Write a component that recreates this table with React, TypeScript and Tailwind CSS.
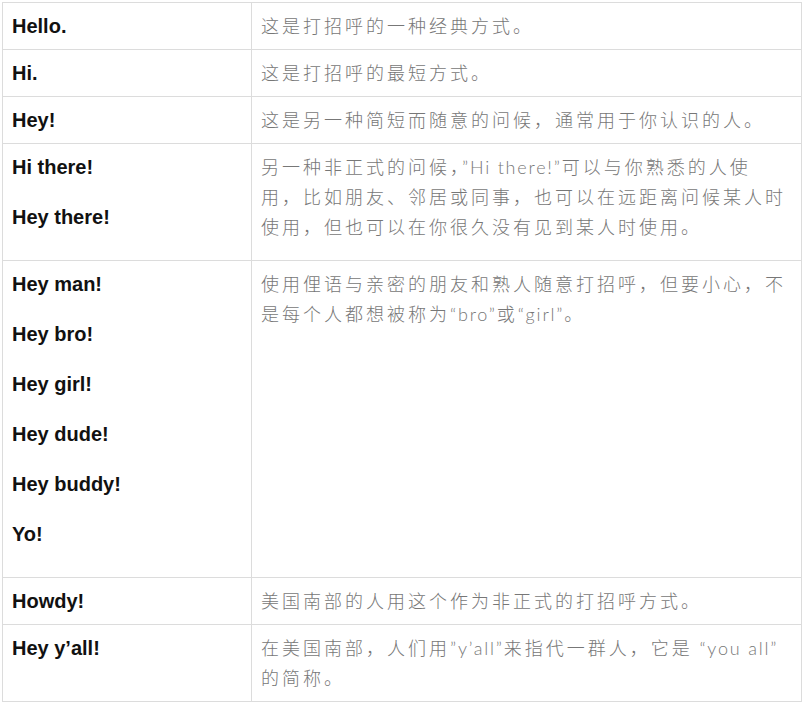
const rows: { left: string[]; right: string[]; tall?: boolean }[] = [
  { left: ["Hello."], right: ["这是打招呼的一种经典方式。"] },
  { left: ["Hi."], right: ["这是打招呼的最短方式。"] },
  { left: ["Hey!"], right: ["这是另一种简短而随意的问候，通常用于你认识的人。"] },
  {
    left: ["Hi there!", "Hey there!"],
    right: [
      "另一种非正式的问候，”Hi there!”可以与你熟悉的人使",
      "用，比如朋友、邻居或同事，也可以在远距离问候某人时",
      "使用，但也可以在你很久没有见到某人时使用。",
    ],
    tall: true,
  },
  {
    left: ["Hey man!", "Hey bro!", "Hey girl!", "Hey dude!", "Hey buddy!", "Yo!"],
    right: [
      "使用俚语与亲密的朋友和熟人随意打招呼，但要小心，不",
      "是每个人都想被称为“bro”或“girl”。",
    ],
    tall: true,
  },
  { left: ["Howdy!"], right: ["美国南部的人用这个作为非正式的打招呼方式。"] },
  {
    left: ["Hey y’all!"],
    right: ["在美国南部，人们用”y’all”来指代一群人，它是 “you all”", "的简称。"],
  },
];

const cjk = /[\u3000-\u9fff\uff00-\uffef]/;

// CJK runs get wider spacing than the latin runs
function Line({ text }: { text: string }) {
  const parts = text.match(/[\u3000-\u9fff\uff00-\uffef]+|[^\u3000-\u9fff\uff00-\uffef]+/g) ?? [];
  return (
    <div className="whitespace-nowrap">
      {parts.map((p, i) => (
        <span key={i} className={cjk.test(p) ? "tracking-[3px]" : "tracking-[1.8px]"}>
          {p}
        </span>
      ))}
    </div>
  );
}

export default function App() {
  return (
    <div className="min-h-[704px] bg-white pl-[2px] pt-[2px]">
      <div className="w-[800px] border border-[#dcdcdc]">
        {rows.map((row, i) => (
          <div
            key={i}
            className={`flex ${i < rows.length - 1 ? "border-b border-[#dcdcdc]" : ""}`}
          >
            <div
              className={`w-[249px] shrink-0 border-r border-[#dcdcdc] pl-[9px] pt-2 ${
                row.tall ? "pb-7" : "pb-2"
              } flex flex-col gap-5 font-['Liberation_Sans','Noto_Sans_CJK_SC',sans-serif] text-[20px] font-bold leading-[30px] text-[#111]`}
            >
              {row.left.map((t, j) => (
                <p key={j}>{t}</p>
              ))}
            </div>
            <div className="flex-1 pl-[9px] pt-2 pb-2 font-['Lato','Noto_Sans_CJK_SC',sans-serif] text-[18px] font-light leading-[30px] text-[#777]">
              {row.right.map((t, j) => (
                <Line key={j} text={t} />
              ))}
            </div>
          </div>
        ))}
      </div>
    </div>
  );
}
